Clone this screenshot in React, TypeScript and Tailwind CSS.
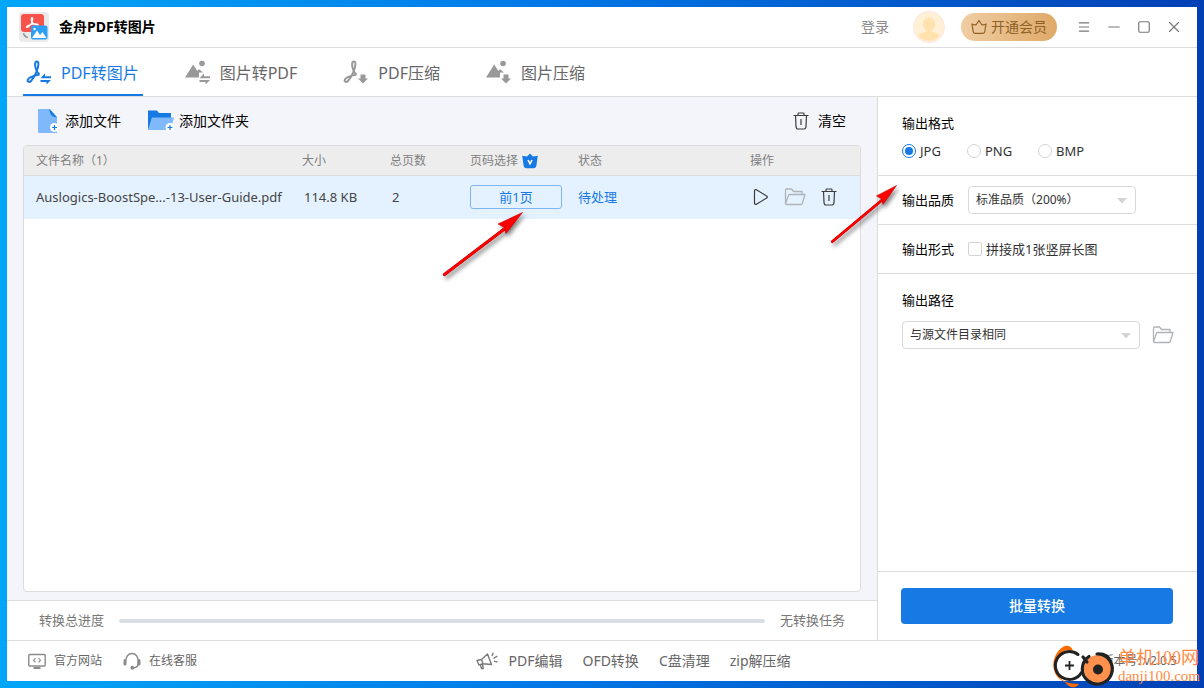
import type { ReactNode } from 'react';
import { Menu, Minus, Square, X } from 'lucide-react';

const SWAP = 'M14.500 18.200h10.500v-2h-6v-3zM25 20H14.500v2h6v2.500z';
const DOWN = 'M17.500 14.500h5v4H25L20 23.500l-5-5h2.500z';

function PdfIcon({ badge }: { badge: string }) {
  return (
    <svg className="w-[26px] h-[26px] shrink-0" viewBox="0 0 26 26" fill="none">
      <path
        d="M13.500 14.500C11 12.500 8.700 7.500 9.200 3.600 9.500.9 12.300.9 12.400 3.800 12.600 8 8.500 17.500 5 21 3.300 22.700 1 21.600 1.900 19.600 3 17.200 8.500 15.600 13.500 14.500"
        stroke="currentColor"
        strokeWidth="2"
      />
      <path d={badge} fill="currentColor" />
    </svg>
  );
}

function ImageIcon({ badge }: { badge: string }) {
  return (
    <svg className="w-[26px] h-[26px] shrink-0" viewBox="0 0 26 26" fill="currentColor">
      <circle cx="17" cy="3.500" r="2.800" />
      <path d="M0 17.500 8.200 4.500l4 6.200 2-1.400 3.800 3.200H14v5z" />
      <path d={badge} />
    </svg>
  );
}

function LogoIcon() {
  return (
    <svg className="w-[30px] h-[30px]" viewBox="0 0 30 30">
      <rect width="30" height="30" rx="4" fill="#ebebeb" />
      <rect x="2" y="2" width="23" height="18" rx="3" fill="#f8524a" />
      <path
        d="M13.500 11.500C12 9.500 11.800 5.500 13 5.500s1 3.500-1 6.500c-1.500 2.300-4 4-4.500 3.200S12 11.500 18 12c1.500.1 1.700 1.400.2 1.200-2-.3-3.700-1-4.700-2.500"
        fill="none"
        stroke="#fff"
        strokeWidth="1.200"
      />
      <path d="M4.500 21c.5 2.500 2 4 4.500 4.500" fill="none" stroke="#999" strokeWidth="1.500" />
      <rect x="12" y="13.500" width="16.500" height="14" rx="2" fill="#2d9ff5" />
      <path d="m13 26 5-7.500 3 4.500 2.500-3 4 6z" fill="#fff" />
      <circle cx="15.500" cy="17" r="1.200" fill="#fff" />
    </svg>
  );
}

function PlusBadge({ x, y }: { x: number; y: number }) {
  return (
    <g>
      <circle cx={x} cy={y} r="4.500" fill="#fff" />
      <path d={`M${x - 2.5} ${y}h5M${x} ${y - 2.5}v5`} stroke="#177ae4" strokeWidth="1.200" />
    </g>
  );
}

function AddFileIcon() {
  return (
    <svg className="w-6 h-6" viewBox="0 0 24 24">
      <path d="M2 0h11l7 8v16H2a1 1 0 0 1-1-1V1a1 1 0 0 1 1-1z" fill="#80b9fb" />
      <path d="m12.500 0 7.500 8.500c-5-.4-7.500-3-7.500-8.500z" fill="#177ae4" />
      <PlusBadge x={17.5} y={18.5} />
    </svg>
  );
}

function AddFolderIcon() {
  return (
    <svg className="w-[27px] h-6" viewBox="0 0 27 24">
      <path d="M0 1.500h9l2 2.500h12v6H0z" fill="#177ae4" />
      <path d="M0 21V1.500L4 8.500 3 15z" fill="#177ae4" />
      <path d="M4 8.500h22L22.500 21H0z" fill="#80b9fb" />
      <PlusBadge x={22} y={18.5} />
    </svg>
  );
}

function TrashIcon() {
  return (
    <svg className="w-[18px] h-[18px]" viewBox="0 0 18 18" fill="none" stroke="#3c3c3c" strokeWidth="1.200">
      <path d="M1.500 3.500h15M6 3.500V1.800C6 1.200 6.300 1 7 1h4c.7 0 1 .2 1 .8v1.700M3.500 3.500l.5 11c.1 1.600.8 2.500 2 2.500h6c1.200 0 1.900-.9 2-2.500l.5-11M9 7v6" />
    </svg>
  );
}

function FolderIcon() {
  return (
    <svg className="w-[22px] h-[18px]" viewBox="0 0 22 18" fill="none" stroke="#b0b4b8" strokeWidth="1.300" strokeLinejoin="round">
      <path d="M1.500 15.500V2c0-.6.300-1 1-1h5l2 2.500h8.500v3" />
      <path d="M5.500 6.500H21l-2.800 9c-.2.700-.6 1-1.200 1H2.500c-.7 0-1.200-.5-.9-1.300l2.900-8c.2-.5.500-.7 1-.7z" />
    </svg>
  );
}

function PlayIcon() {
  return (
    <svg className="w-[18px] h-[18px]" viewBox="0 0 18 18" fill="none" stroke="#3c3c3c" strokeWidth="1.200" strokeLinejoin="round">
      <path d="M2.500 3c0-1.200.9-1.800 1.900-1.200l10.200 6.100c1 .6 1 1.600 0 2.200L4.400 16.200c-1 .6-1.900 0-1.900-1.200z" />
    </svg>
  );
}

function CrownIcon() {
  return (
    <svg className="w-4 h-4" viewBox="0 0 16 16">
      <path d="M8 .5 11 3.400l4.800-.6-1.400 9.700c-.3 1.800-1.300 2.800-2.900 2.800h-7c-1.600 0-2.600-1-2.900-2.800L.2 2.800 5 3.400z" fill="#177ae4" />
      <path d="m6 7 2 3.800L10 7" fill="none" stroke="#fff" strokeWidth="1.600" />
    </svg>
  );
}

function VipIcon() {
  return (
    <svg className="w-4 h-4" viewBox="0 0 16 16" fill="none" stroke="#8f6127" strokeWidth="1.200" strokeLinejoin="round">
      <path d="M8 1.500 10.700 5.500c1 .8 2.500.4 4.300-.5l-1.200 7.500c-.2 1.300-.8 1.800-1.800 1.800H4c-1 0-1.600-.5-1.800-1.800L1 5c1.800.9 3.300 1.300 4.300.5z" />
    </svg>
  );
}

function SiteIcon() {
  return (
    <svg className="w-[18px] h-[18px]" viewBox="0 0 18 18" fill="none" stroke="#8a8a8a" strokeWidth="1.400">
      <rect x=".8" y="2.500" width="16.400" height="11.500" rx="1" />
      <path d="M5.500 16h7" strokeWidth="2" />
      <path d="M7.500 6 5.500 8.200l2 2.200M10.500 6l2 2.200-2 2.200" strokeWidth="1.100" />
    </svg>
  );
}

function HeadsetIcon() {
  return (
    <svg className="w-[18px] h-[18px]" viewBox="0 0 18 18" fill="none" stroke="#8a8a8a" strokeWidth="1.500">
      <path d="M2.800 8.500a6.200 7 0 0 1 12.400 0v3c0 2.500-1.800 4-4.700 4.500" />
      <path d="M2 8.500v3.500M16 8.500v3.500" strokeWidth="3" strokeLinecap="round" />
      <circle cx="9.300" cy="15.800" r="1.200" fill="#8a8a8a" />
    </svg>
  );
}

function HornIcon() {
  return (
    <svg className="w-[22px] h-[18px]" viewBox="0 0 22 18" fill="none" stroke="#7a7a7a" strokeWidth="1.400" strokeLinejoin="round">
      <path d="M5.500 7.500 11.500 2l4 10.500-8.500-.8-4 1.300-2-4.500zM5.500 7.500 7 11.700M4.500 13l1 3.500h1.800l-.8-4" />
      <path d="M16 4 17.300.8M17.500 6.500 21.300 4.200M18 9.200l3.500 1" />
    </svg>
  );
}

const tabs: { label: string; icon: ReactNode }[] = [
  { label: 'PDF转图片', icon: <PdfIcon badge={SWAP} /> },
  { label: '图片转PDF', icon: <ImageIcon badge={SWAP} /> },
  { label: 'PDF压缩', icon: <PdfIcon badge={DOWN} /> },
  { label: '图片压缩', icon: <ImageIcon badge={DOWN} /> },
];

const formats = ['JPG', 'PNG', 'BMP'];
const tools = ['PDF编辑', 'OFD转换', 'C盘清理', 'zip解压缩'];

function TitleBar() {
  return (
    <header className="flex items-center h-[41px] pl-3 pr-4 border-b border-[#dcdcdc]">
      <LogoIcon />
      <h1 className="ml-[10px] text-sm font-bold text-black">金舟PDF转图片</h1>
      <div className="ml-auto flex items-center">
        <button className="text-sm text-[#888]">登录</button>
        <svg className="ml-6 w-8 h-8" viewBox="0 0 32 32">
          <circle cx="16" cy="16" r="15.500" fill="#fff0d6" stroke="#ffe3e0" />
          <path d="M10 13a6 6.500 0 0 1 12 0c0 3-1.500 5-3.500 6.500 0 2 7 2 8 5.500a14 14 0 0 1-21 0c1-3.500 8-3.500 8-5.500C11.500 18 10 16 10 13z" fill="#ffe2ad" />
        </svg>
        <button className="ml-4 flex items-center gap-1 h-7 px-[10px] rounded-full text-sm text-[#8f6127] bg-linear-to-r from-[#efcda2] to-[#dfa968]">
          <VipIcon />
          开通会员
        </button>
        <div className="ml-5 flex items-center gap-4 text-[#777]">
          <button aria-label="菜单"><Menu size={14} strokeWidth={2} /></button>
          <button aria-label="最小化"><Minus size={14} strokeWidth={2} className="scale-x-125" /></button>
          <button aria-label="最大化"><Square size={14} strokeWidth={2} /></button>
          <button aria-label="关闭"><X size={18} strokeWidth={1.5} className="-mx-[2px]" /></button>
        </div>
      </div>
    </header>
  );
}

function FileTable() {
  return (
    <div className="flex-1 mx-4 mb-2 bg-white border border-[#dcdcdc] rounded overflow-hidden">
      <table className="w-full table-fixed text-left">
        <colgroup>
          <col />
          <col className="w-[88px]" />
          <col className="w-20" />
          <col className="w-[108px]" />
          <col className="w-[172px]" />
          <col className="w-[122px]" />
        </colgroup>
        <thead>
          <tr className="h-[29px] bg-[#ededed] border-b border-[#dcdcdc] text-xs text-[#808080] *:font-normal *:pl-3 *:pt-[2px]">
            <th>文件名称（1）</th>
            <th>大小</th>
            <th>总页数</th>
            <th>
              <span className="flex items-center gap-1">页码选择<CrownIcon /></span>
            </th>
            <th>状态</th>
            <th>操作</th>
          </tr>
        </thead>
        <tbody>
          <tr className="h-11 bg-[#e4f2ff] text-[13px] text-[#444] whitespace-nowrap">
            <td className="pl-3">Auslogics-BoostSpe...-13-User-Guide.pdf</td>
            <td className="pl-[14px]">114.8 KB</td>
            <td className="pl-[14px]">2</td>
            <td className="pl-3">
              <button className="block w-[92px] h-6 border border-[#7fb5f2] rounded-[3px] text-[#177ae4]">前1页</button>
            </td>
            <td className="pl-3 text-[#177ae4]">待处理</td>
            <td className="pl-[14px]">
              <div className="flex items-center gap-[14px]">
                <button aria-label="开始"><PlayIcon /></button>
                <button aria-label="打开文件夹"><FolderIcon /></button>
                <button aria-label="删除"><TrashIcon /></button>
              </div>
            </td>
          </tr>
        </tbody>
      </table>
    </div>
  );
}

function Dropdown({ id, value, className }: { id: string; value: string; className: string }) {
  return (
    <div className={`relative ${className}`}>
      <select id={id} className="block w-full h-7 pl-[7px] pr-6 appearance-none bg-white border border-[#d9d9d9] rounded text-xs text-[#333]">
        <option>{value}</option>
      </select>
      <svg className="absolute right-[9px] top-[12px] w-[10px] h-[6px] pointer-events-none" viewBox="0 0 10 6">
        <path d="M0 0h10L5 5.500z" fill="#d4d4d4" />
      </svg>
    </div>
  );
}

function OutputPanel() {
  return (
    <aside className="w-80 shrink-0 flex flex-col bg-white border-l border-[#dcdcdc] text-[13px] leading-5 text-[#333]">
      <fieldset className="h-[79px] pt-4 pl-6 border-b border-[#dcdcdc]">
        <legend className="float-left w-full text-black">输出格式</legend>
        <div className="flex gap-[26px] pt-2 clear-both">
          {formats.map((format) => (
            <label key={format} className="flex items-center gap-1">
              <input
                type="radio"
                name="format"
                defaultChecked={format === 'JPG'}
                className="appearance-none w-[14px] h-[14px] rounded-full border border-[#d4d4d4] bg-white checked:border-[#177ae4] checked:bg-[#177ae4] checked:bg-clip-content checked:p-[2px]"
              />
              {format}
            </label>
          ))}
        </div>
      </fieldset>
      <div className="flex items-center h-[49px] pl-6 border-b border-[#dcdcdc]">
        <label htmlFor="quality" className="text-black mr-[14px]">输出品质</label>
        <Dropdown id="quality" value="标准品质（200%）" className="w-[168px]" />
      </div>
      <div className="flex items-center h-[49px] pl-6 border-b border-[#dcdcdc]">
        <span className="text-black mr-[14px]">输出形式</span>
        <label className="flex items-center gap-1">
          <input type="checkbox" className="appearance-none w-[14px] h-[14px] rounded-[2px] border border-[#d4d4d4] bg-white checked:bg-[#177ae4]" />
          拼接成1张竖屏长图
        </label>
      </div>
      <div className="pt-4 pl-6 pr-[23px]">
        <label htmlFor="path" className="block text-black">输出路径</label>
        <div className="flex items-center gap-3 mt-[11px]">
          <Dropdown id="path" value="与源文件目录相同" className="flex-1" />
          <button aria-label="选择文件夹"><FolderIcon /></button>
        </div>
      </div>
      <div className="mt-auto h-[69px] pl-[23px] pr-6 pt-4 border-t border-[#dcdcdc]">
        <button className="w-full h-9 rounded bg-[#177ae4] text-sm font-medium text-white">批量转换</button>
      </div>
    </aside>
  );
}

function Footer() {
  return (
    <footer className="flex items-center justify-between h-[41px] pl-[21px] pr-5 border-t border-[#dcdcdc] text-xs text-[#666]">
      <div className="flex gap-[21px]">
        <a href="#site" className="flex items-center gap-2"><SiteIcon />官方网站</a>
        <a href="#service" className="flex items-center gap-2"><HeadsetIcon />在线客服</a>
      </div>
      <nav className="flex items-center gap-5 ml-[65px] text-sm">
        <a href="#pdf" className="flex items-center gap-[10px]"><HornIcon />{tools[0]}</a>
        {tools.slice(1).map((tool) => (
          <a key={tool} href={`#${tool}`}>{tool}</a>
        ))}
      </nav>
      <p className="w-[172px] text-right">版本号: v2.0.5</p>
    </footer>
  );
}

function Watermark() {
  return (
    <div className="absolute right-1 bottom-0 flex items-center text-[#ff8a45] pointer-events-none">
      <svg className="w-[66px] h-[44px]" viewBox="0 0 66 44">
        <path d="M21 6.500C18-1 10 1 5 9c-7 10-4 25 8 29 3 5 10 8 14 2l-7-.5C3 38-1 20 9 9c4-3.500 8-3.500 12-2.500z" fill="#ff6a00" />
        <circle cx="17.500" cy="21.500" r="14" fill="#fff" />
        <path d="M26 10.500a14 14 0 1 0 3.500 18" fill="none" stroke="#222" strokeWidth="3" strokeLinecap="round" />
        <path d="M17.500 17v9M13 21.500h9" stroke="#222" strokeWidth="1.800" />
        <circle cx="46" cy="25" r="14" fill="#ff914d" />
        <path d="M37 12.500a15 15 0 1 0 9-2.500M31 13l4 5M45 10c7-.5 12 3 14 8" fill="none" stroke="#222" strokeWidth="3.200" strokeLinecap="round" />
        <circle cx="46" cy="25.500" r="5" fill="#222" />
      </svg>
      <div className="font-['Liberation_Serif','Noto_Sans_CJK_SC',serif]">
        <div className="text-[18px] leading-5">单机100网</div>
        <div className="text-[15px] leading-4">danji100.com</div>
      </div>
    </div>
  );
}

function PointerArrow({ className }: { className: string }) {
  return (
    <svg className={`absolute overflow-visible drop-shadow-[2px_3px_2px_rgba(0,0,0,0.5)] pointer-events-none ${className}`} viewBox="0 0 80 64" preserveAspectRatio="none">
      <path d="M1.500 62.500 64 15" stroke="#b00" strokeWidth="3.200" strokeLinecap="round" />
      <path d="M1.500 62.500 64 15" stroke="#f00" strokeWidth="2.400" strokeLinecap="round" />
      <path d="M79.500.500 63 21.500l-1.500-6L55 12z" fill="#f00" stroke="#b00" strokeWidth=".6" />
    </svg>
  );
}

export default function App() {
  return (
    <div className="relative flex min-h-screen p-[7px] bg-linear-to-r from-[#00a6f8] via-[#0078e8] via-45% to-[#0040b4] font-['Noto_Sans','Noto_Sans_CJK_SC',sans-serif]">
      <div className="flex-1 flex flex-col bg-white">
        <TitleBar />
        <nav className="flex gap-[39px] h-[49px] pl-4 border-b border-[#dcdcdc]">
          {tabs.map((tab, i) => (
            <button
              key={tab.label}
              className={`flex items-center gap-[9px] pl-[3px] pr-1 pt-[3px] border-b-2 ${i === 0 ? 'text-[#177ae4] border-[#177ae4]' : 'text-[#666] border-transparent'}`}
            >
              <span className={i === 0 ? '' : 'text-[#999]'}>{tab.icon}</span>
              {tab.label}
            </button>
          ))}
        </nav>
        <div className="flex-1 flex">
          <main className="flex-1 flex flex-col bg-[#f4f5fa]">
            <div className="flex items-center h-12 pl-[30px] pr-[31px] text-sm text-black">
              <button className="flex items-center gap-1"><AddFileIcon />添加文件</button>
              <button className="flex items-center gap-1 ml-[27px]"><AddFolderIcon />添加文件夹</button>
              <button className="flex items-center gap-2 ml-auto"><TrashIcon />清空</button>
            </div>
            <FileTable />
            <div className="flex items-center h-10 px-8 bg-white border-t border-[#dcdcdc] text-[13px] text-[#777]">
              <span>转换总进度</span>
              <div role="progressbar" aria-label="转换总进度" aria-valuenow={0} className="flex-1 h-1 mx-[15px] rounded-full bg-[#d8dee3]" />
              <span>无转换任务</span>
            </div>
          </main>
          <OutputPanel />
        </div>
        <Footer />
      </div>
      <PointerArrow className="left-[443px] top-[212px] w-20 h-16" />
      <PointerArrow className="left-[831px] top-[185px] w-[66px] h-[58px]" />
      <Watermark />
    </div>
  );
}
